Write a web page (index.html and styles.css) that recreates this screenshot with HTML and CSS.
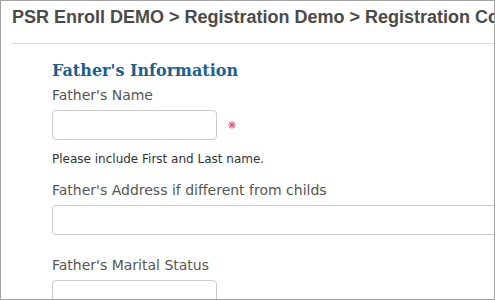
FILE: index.html
```html
<!DOCTYPE html>
<html>
<head>
<meta charset="utf-8">
<link rel="stylesheet" href="styles.css">
</head>
<body>
<div class="frame">
  <div class="crumbs">PSR Enroll DEMO &gt; Registration Demo &gt; Registration Confirmation</div>
  <div class="rule"></div>
  <div class="form">
    <h2 class="section-title">Father's Information</h2>
    <label class="field-label">Father's Name</label>
    <div class="row">
      <input class="input short" type="text">
      <svg class="req" width="8" height="8" viewBox="0 0 8 8"><g stroke="#df4677" stroke-width="1.1" stroke-linecap="round"><line x1="0.6" y1="4" x2="7.4" y2="4"/><line x1="4" y1="0.6" x2="4" y2="7.4"/><line x1="1.6" y1="1.6" x2="6.4" y2="6.4"/><line x1="6.4" y1="1.6" x2="1.6" y2="6.4"/></g></svg>
    </div>
    <p class="help">Please include First and Last name.</p>
    <label class="field-label">Father's Address if different from childs</label>
    <div class="row">
      <input class="input wide" type="text">
    </div>
    <label class="field-label gap-lg">Father's Marital Status</label>
    <div class="row">
      <input class="input short" type="text">
    </div>
  </div>
</div>
</body>
</html>
```
FILE: styles.css
```css
html, body {
  margin: 0;
  padding: 0;
  background: #fff;
}
.frame {
  box-sizing: border-box;
  width: 495px;
  height: 300px;
  border: 1px solid #a3a3a3;
  overflow: hidden;
  background: #fff;
}
.crumbs {
  margin: 5px 0 0 11px;
  font-family: "Liberation Sans", Arial, sans-serif;
  font-weight: bold;
  font-size: 18px;
  line-height: 22px;
  color: #4a4a4a;
  white-space: nowrap;
  overflow: hidden;
}
.rule {
  margin: 15px 0 0 11px;
  border-top: 1px solid #dcdcdc;
}
.form {
  padding-left: 51px;
  display: flex;
  flex-direction: column;
  align-items: flex-start;
}
.section-title {
  margin: 17px 0 0 0;
  font-family: "DejaVu Serif", Georgia, serif;
  font-weight: bold;
  font-size: 16px;
  line-height: 20px;
  color: #1e5f8b;
}
.field-label {
  display: block;
  margin-top: 5px;
  font-family: "DejaVu Sans", Verdana, sans-serif;
  font-size: 14px;
  line-height: 18px;
  color: #565656;
}
.gap-lg {
  margin-top: 21px;
}
.row {
  display: flex;
  align-items: center;
  margin-top: 6px;
}
.input {
  box-sizing: border-box;
  height: 30px;
  margin: 0;
  padding: 4px 8px;
  border: 1px solid #cccccc;
  border-radius: 4px;
  background: #fff;
  font-family: "DejaVu Sans", sans-serif;
  font-size: 14px;
}
.short {
  width: 165px;
}
.wide {
  width: 520px;
}
.req {
  margin-left: 11px;
}
.help {
  margin: 12px 0 0 0;
  font-family: "DejaVu Sans", Verdana, sans-serif;
  font-size: 12px;
  line-height: 15px;
  color: #333;
}
.help + .field-label {
  margin-top: 14px;
}
```
